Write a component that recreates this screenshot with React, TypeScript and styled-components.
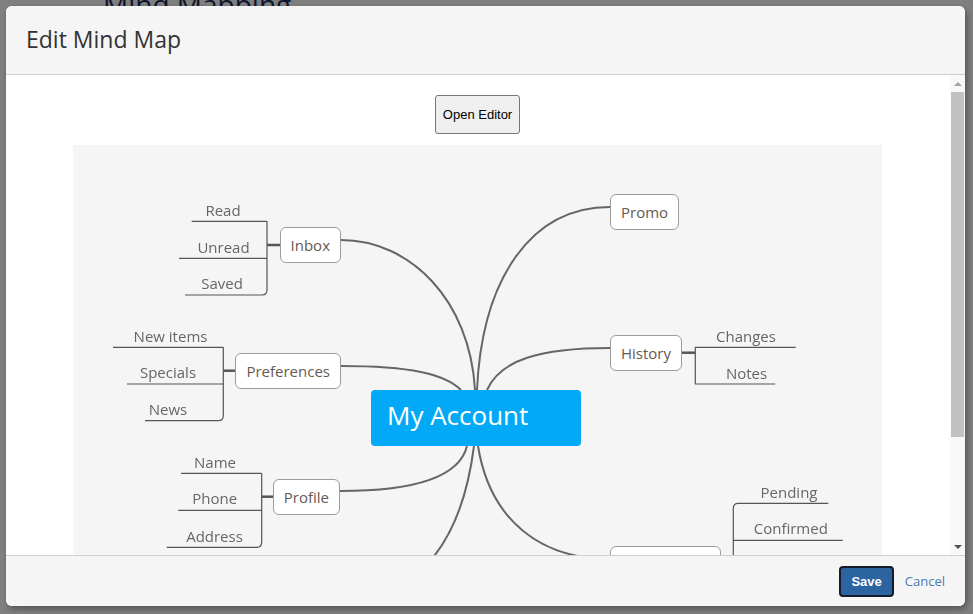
import React from "react";
import styled, { createGlobalStyle } from "styled-components";

// canvas origin in page coordinates, all map data below is in page px
const OX = 73;
const OY = 145;
const CANVAS_W = 809;
const CANVAS_H = 530;

type Anchor = "left" | "right";

type TopicNode = {
  id: string;
  label: string;
  x: number;
  y: number;
  anchor: Anchor;
};

type LeafNode = {
  label: string;
  x: number;
  y: number;
};

const topics: TopicNode[] = [
  { id: "inbox", label: "Inbox", x: 341, y: 227, anchor: "right" },
  { id: "prefs", label: "Preferences", x: 341, y: 353, anchor: "right" },
  { id: "profile", label: "Profile", x: 340, y: 479, anchor: "right" },
  { id: "promo", label: "Promo", x: 610, y: 194, anchor: "left" },
  { id: "history", label: "History", x: 610, y: 335, anchor: "left" },
  { id: "orders", label: "Order Status", x: 610, y: 546, anchor: "left" },
];

const leaves: LeafNode[] = [
  { label: "Read", x: 223, y: 210 },
  { label: "Unread", x: 223.5, y: 246.5 },
  { label: "Saved", x: 222, y: 283 },
  { label: "New items", x: 170.5, y: 336 },
  { label: "Specials", x: 168, y: 372 },
  { label: "News", x: 168, y: 409 },
  { label: "Name", x: 215, y: 461.5 },
  { label: "Phone", x: 214.7, y: 498 },
  { label: "Address", x: 214.5, y: 535.5 },
  { label: "Changes", x: 746, y: 336 },
  { label: "Notes", x: 746.5, y: 372.5 },
  { label: "Pending", x: 789, y: 491.7 },
  { label: "Confirmed", x: 790.8, y: 528.3 },
];

const branches = [
  "M341,240 C410,240 470,300 475,390",
  "M341,366 C410,366 445,374 461,390",
  "M610,207 C530,207 482,280 477,390",
  "M610,348 C540,348 500,360 487,390",
  "M340,491 C420,491 460,475 467,446",
  "M474,446 C462,540 420,598 345,598",
  "M478,446 C490,520 540,559 610,559",
];

const rules = [
  // inbox
  "M191.7,221.3 H267",
  "M179,258.3 H267",
  "M185,295 H262 Q267,295 267,290 V221.3",
  // preferences
  "M113,347.3 H223.3",
  "M127,384 H223.3",
  "M145,420.7 H218.3 Q223.3,420.7 223.3,415.7 V347.3",
  // profile
  "M181,473.3 H261.7",
  "M178.3,510.3 H261.7",
  "M166.7,547.3 H256.7 Q261.7,547.3 261.7,542.3 V473.3",
  // history
  "M795.7,347.3 H695.3 V384 H775.3",
  // orders
  "M828.3,503.3 H738.3 Q733.3,503.3 733.3,508.3 V609 Q733.3,614 738.3,614 H832",
  "M733.3,540.3 H842.7",
  "M733.3,577 H826",
];

const stubs = [
  "M267,245 H282",
  "M223.3,370.7 H237",
  "M261.7,496.7 H276",
  "M680,352.7 H695.3",
  "M718,563 H733.3",
];

const GlobalStyle = createGlobalStyle`
  html, body {
    margin: 0;
    padding: 0;
  }
  body {
    background: #ffffff;
    font-family: "Open Sans", "Noto Sans", Arial, sans-serif;
  }
  * {
    box-sizing: border-box;
  }
`;

const Page = styled.div`
  min-height: 100vh;
  padding-left: 103px;
`;

const PageTitle = styled.h1`
  margin: -15px 0 0;
  font-size: 28px;
  font-weight: 400;
  color: #1c2b5a;
`;

const Backdrop = styled.div`
  position: fixed;
  inset: 0;
  background: rgba(0, 0, 0, 0.5);
`;

const Modal = styled.div`
  position: fixed;
  left: 6px;
  top: 6px;
  width: 959px;
  height: 600px;
  display: flex;
  flex-direction: column;
  background: #ffffff;
  border-radius: 6px;
  overflow: hidden;
  box-shadow: 2px 3px 6px rgba(0, 0, 0, 0.35);
`;

const Header = styled.header`
  flex: 0 0 69px;
  display: flex;
  align-items: center;
  padding: 0 20px;
  background: #f5f5f5;
  border-bottom: 1px solid #cfcfcf;
`;

const Title = styled.h2`
  margin: 0 0 2px;
  font-size: 23px;
  font-weight: 400;
  color: #333333;
`;

const BodyRow = styled.div`
  flex: 1;
  min-height: 0;
  display: flex;
`;

const Body = styled.div`
  flex: 1;
  min-width: 0;
  overflow: hidden;
  padding: 20px 21px 20px 20px;
  display: flex;
  flex-direction: column;
  align-items: center;
  gap: 11px;
`;

const ScrollRail = styled.div`
  flex: 0 0 15px;
  display: flex;
  flex-direction: column;
  background: #f8f8f8;
`;

const ScrollArrow = styled.div<{ $dir: "up" | "down" }>`
  flex: 0 0 17px;
  display: flex;
  align-items: center;
  justify-content: center;

  &::after {
    content: "";
    width: 0;
    height: 0;
    border-left: 4px solid transparent;
    border-right: 4px solid transparent;
    ${(p) =>
      p.$dir === "up"
        ? "border-bottom: 4px solid #a3a3a3;"
        : "border-top: 4px solid #505050;"}
  }
`;

const ScrollTrack = styled.div`
  flex: 1;
  padding: 0 1px;
`;

const ScrollThumb = styled.div`
  height: 345px;
  background: #c1c1c1;
`;

const EditorButton = styled.button`
  flex-shrink: 0;
  height: 39px;
  padding: 0 7px;
  font-family: "Liberation Sans", Arial, sans-serif;
  font-size: 13px;
  color: #000000;
  background: #efefef;
  border: 1px solid #767676;
  border-radius: 3px;
`;

const Canvas = styled.div`
  position: relative;
  flex-shrink: 0;
  width: ${CANVAS_W}px;
  height: ${CANVAS_H}px;
  background: #f5f5f5;
  overflow: hidden;
  font-family: "Open Sans", "Noto Sans", sans-serif;
`;

const Wires = styled.svg`
  position: absolute;
  inset: 0;
  width: 100%;
  height: 100%;
`;

const Branch = styled.path`
  fill: none;
  stroke: #666666;
  stroke-width: 2;
`;

const Rule = styled.path<{ $weight?: number }>`
  fill: none;
  stroke: #555555;
  stroke-width: ${(p) => p.$weight ?? 1.2};
`;

const Central = styled.div`
  position: absolute;
  left: ${371 - OX}px;
  top: ${390 - OY}px;
  width: 210px;
  height: 56px;
  display: flex;
  align-items: center;
  padding: 0 0 6px 16px;
  background: #02a9f7;
  border-radius: 4px;
  color: #ffffff;
  font-size: 26px;
  white-space: nowrap;
`;

const Topic = styled.div<{ $x: number; $y: number; $anchor: Anchor }>`
  position: absolute;
  top: ${(p) => p.$y - OY}px;
  ${(p) =>
    p.$anchor === "left"
      ? `left: ${p.$x - OX}px;`
      : `right: ${CANVAS_W - (p.$x - OX)}px;`}
  height: 36px;
  display: flex;
  align-items: center;
  padding: 0 10px;
  background: #ffffff;
  border: 1px solid #9c9c9c;
  border-radius: 6px;
  font-size: 15px;
  color: #665a50;
  white-space: nowrap;
`;

const Leaf = styled.span<{ $x: number; $y: number }>`
  position: absolute;
  left: ${(p) => p.$x - OX}px;
  top: ${(p) => p.$y - OY}px;
  transform: translate(-50%, -50%);
  line-height: 20px;
  font-size: 15px;
  color: #666666;
  white-space: nowrap;
`;

const Footer = styled.footer`
  flex: 0 0 51px;
  display: flex;
  justify-content: flex-end;
  align-items: center;
  gap: 11px;
  padding: 0 20px;
  background: #f5f5f5;
  border-top: 1px solid #cfcfcf;
`;

const SaveButton = styled.button`
  height: 31px;
  padding: 0 10px;
  font-family: "Liberation Sans", Arial, sans-serif;
  font-size: 13px;
  font-weight: 700;
  color: #ffffff;
  background: #2c64a1;
  border: 2px solid #141c2a;
  border-radius: 4px;
`;

const CancelLink = styled.a`
  font-size: 13px;
  color: #4a7ab4;
  text-decoration: none;
  cursor: pointer;
`;

const MindMap = () => (
  <Canvas>
    <Wires viewBox={`0 0 ${CANVAS_W} ${CANVAS_H}`}>
      <g transform={`translate(${-OX} ${-OY})`}>
        {branches.map((d) => (
          <Branch key={d} d={d} />
        ))}
        {rules.map((d) => (
          <Rule key={d} d={d} />
        ))}
        {stubs.map((d) => (
          <Rule key={d} d={d} $weight={2.5} />
        ))}
      </g>
    </Wires>
    {leaves.map((l) => (
      <Leaf key={l.label} $x={l.x} $y={l.y}>
        {l.label}
      </Leaf>
    ))}
    {topics.map((t) => (
      <Topic key={t.id} $x={t.x} $y={t.y} $anchor={t.anchor}>
        {t.label}
      </Topic>
    ))}
    <Central>My Account</Central>
  </Canvas>
);

const App = () => {
  return (
    <>
      <GlobalStyle />
      <Page>
        <PageTitle>Mind Mapping</PageTitle>
      </Page>
      <Backdrop />
      <Modal>
        <Header>
          <Title>Edit Mind Map</Title>
        </Header>
        <BodyRow>
          <Body>
            <EditorButton>Open Editor</EditorButton>
            <MindMap />
          </Body>
          <ScrollRail>
            <ScrollArrow $dir="up" />
            <ScrollTrack>
              <ScrollThumb />
            </ScrollTrack>
            <ScrollArrow $dir="down" />
          </ScrollRail>
        </BodyRow>
        <Footer>
          <SaveButton>Save</SaveButton>
          <CancelLink>Cancel</CancelLink>
        </Footer>
      </Modal>
    </>
  );
};

export default App;
